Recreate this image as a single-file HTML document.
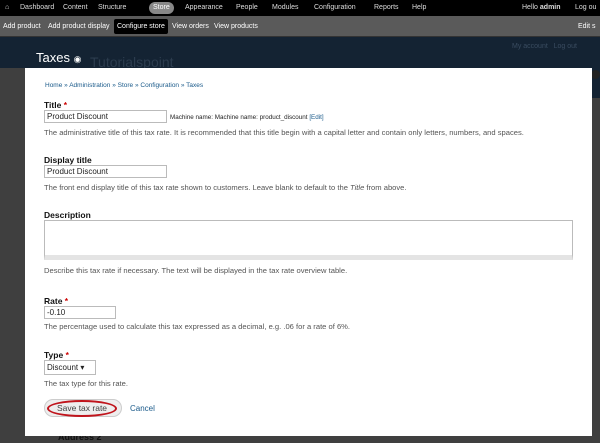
<!DOCTYPE html>
<html><head><style>
*{margin:0;padding:0;box-sizing:border-box}
body{width:600px;height:443px;overflow:hidden;background:#3f3f3f;font-family:"Liberation Sans",sans-serif;position:relative}
.t1{position:absolute;left:0;top:0;width:600px;height:16px;background:#000;color:#ddd;font-size:7px;line-height:16px;white-space:nowrap}
.t1 span{position:absolute;top:0}
.t2{position:absolute;left:0;top:16px;width:600px;height:21px;background:#5a5a5a;color:#fff;font-size:7px;line-height:21px;white-space:nowrap;border-bottom:1px solid #333}
.t2 span{position:absolute;top:0}
.hdr{position:absolute;left:0;top:37px;width:600px;height:31px;background:#142333}
.modal{position:absolute;left:25px;top:68px;width:567px;height:368px;background:#fff;font-size:7px;color:#444}
.a{position:absolute}
label{position:absolute;font-weight:bold;font-size:8.5px;color:#111}
.req{color:#c00}
.inp{position:absolute;border:1px solid #bbb;height:13px;font-size:8px;line-height:11px;padding-left:2px;color:#222}
.d{position:absolute;font-size:7.6px;color:#555;white-space:nowrap}
</style></head><body>
<div class="t1">
<span style="left:5px">&#8962;</span>
<span style="left:20px">Dashboard</span><span style="left:63px">Content</span><span style="left:98px">Structure</span>
<span style="left:149px;top:2px;height:12px;line-height:12px;background:#888;border-radius:6px;padding:0 4px;color:#fff">Store</span>
<span style="left:161px"></span>
<span style="left:161px"></span>
<span style="left:185px">Appearance</span><span style="left:236px">People</span><span style="left:272px">Modules</span><span style="left:314px">Configuration</span><span style="left:374px">Reports</span><span style="left:412px">Help</span>
<span style="left:522px">Hello <b>admin</b></span><span style="left:575px">Log ou</span>
</div>
<div class="t2">
<span style="left:3px">Add product</span><span style="left:48px">Add product display</span>
<span style="left:114px;top:3px;height:15px;line-height:15px;background:#000;border-radius:2px;padding:0 3px">Configure store</span>
<span style="left:172px">View orders</span><span style="left:214px">View products</span>
<span style="left:578px">Edit s</span>
</div>
<div class="hdr">
<div class="a" style="left:36px;top:13px;color:#fff;font-size:13px">Taxes <span style="font-size:9px">&#9673;</span></div>
<div class="a" style="left:90px;top:17px;color:#2c3c4e;font-size:14px">Tutorialspoint</div>
<div class="a" style="left:512px;top:6px;color:#3a4c60;font-size:7px">My account &nbsp; Log out</div>
</div>
<div class="a" style="left:592px;top:68px;width:8px;height:30px;background:#142333"></div>
<div class="a" style="left:591px;top:70px;width:9px;height:9px;border-radius:50%;background:#222"></div>
<div class="a" style="left:58px;top:432px;font-size:9px;font-weight:bold;color:#111">Address 2</div>
<div class="modal">
<div class="d" style="left:20px;top:14px;color:#1a5a8a;font-size:6.5px">Home » Administration » Store » Configuration » Taxes</div>
<label style="left:19px;top:32px">Title <span class="req">*</span></label>
<div class="inp" style="left:19px;top:42px;width:123px">Product Discount</div>
<div class="d" style="left:145px;top:46px;color:#222;font-size:6.3px">Machine name: Machine name: product_discount <span style="color:#1a5a8a">[Edit]</span></div>
<div class="d" style="left:19px;top:60px">The administrative title of this tax rate. It is recommended that this title begin with a capital letter and contain only letters, numbers, and spaces.</div>
<label style="left:19px;top:87px">Display title</label>
<div class="inp" style="left:19px;top:97px;width:123px">Product Discount</div>
<div class="d" style="left:19px;top:115px">The front end display title of this tax rate shown to customers. Leave blank to default to the <i>Title</i> from above.</div>
<label style="left:19px;top:142px">Description</label>
<div class="a" style="left:19px;top:152px;width:529px;height:40px;border:1px solid #bbb;border-bottom:5px solid #e4e4e4"></div>
<div class="d" style="left:19px;top:198px">Describe this tax rate if necessary. The text will be displayed in the tax rate overview table.</div>
<label style="left:19px;top:228px">Rate <span class="req">*</span></label>
<div class="inp" style="left:19px;top:238px;width:72px">-0.10</div>
<div class="d" style="left:19px;top:254px">The percentage used to calculate this tax expressed as a decimal, e.g. .06 for a rate of 6%.</div>
<label style="left:19px;top:282px">Type <span class="req">*</span></label>
<div class="inp" style="left:19px;top:292px;width:52px;height:15px;line-height:13px">Discount &#9662;</div>
<div class="d" style="left:19px;top:311px">The tax type for this rate.</div>
<div class="a" style="left:19px;top:331px;width:78px;height:18px;border-radius:9px;background:#eee;border:1px solid #ccc"></div>
<div class="a" style="left:22px;top:332px;width:70px;height:17px;border-radius:50%;border:2px solid #c0141c;font-size:8.5px;line-height:13px;text-align:center;color:#444">Save tax rate</div>
<div class="a" style="left:105px;top:336px;font-size:8px;color:#1a5a8a">Cancel</div>
</div>
</body></html>
